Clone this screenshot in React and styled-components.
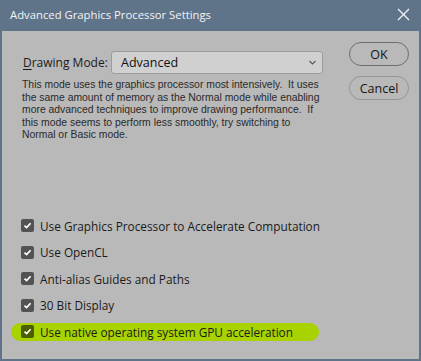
import React from "react";
import styled, { createGlobalStyle } from "styled-components";

const Global = createGlobalStyle`
  html, body { margin: 0; padding: 0; background: #b9b9b9; }
  * { box-sizing: border-box; }
`;

const Window = styled.div`
  width: 421px;
  height: 361px;
  display: flex;
  flex-direction: column;
  background: #b9b9b9;
  border: 2px solid #5f7389;
  border-top: none;
  font-family: "Open Sans", "Noto Sans", sans-serif;
  color: #1b1b1b;
`;

const TitleBar = styled.div`
  height: 31px;
  flex: none;
  display: flex;
  align-items: center;
  justify-content: space-between;
  background: #5f7389;
  margin: 0 -2px;
  padding: 0 10px 2px 10px;
  color: #f2f4f6;
  font-size: 11.3px;
`;

const CloseIcon = styled.svg`
  width: 13px;
  height: 13px;
  margin-right: 1px;
`;

const Body = styled.div`
  flex: 1;
  display: flex;
  flex-direction: column;
  padding: 11px 10px 0 19px;
`;

const Top = styled.div`
  display: flex;
  justify-content: space-between;
`;

const Main = styled.div`
  width: 302px;
  padding-top: 9px;
`;

const ModeRow = styled.div`
  display: flex;
  align-items: center;
`;

const Label = styled.span`
  font-size: 12px;
  padding-left: 2px;
  width: 90px;
  flex: none;
  white-space: nowrap;
  u { text-decoration: underline; text-underline-offset: 2px; }
`;

const Select = styled.div`
  flex: 1;
  height: 23px;
  display: flex;
  align-items: center;
  justify-content: space-between;
  padding: 0 6px 0 9px;
  background: #d0d0d0;
  border: 1px solid #9b9b9b;
  border-radius: 3px;
  font-size: 12.5px;
  color: #111;
`;

const Description = styled.p`
  margin: 5px 0 0 1px;
  font-family: "Liberation Sans", Arial, sans-serif;
  font-size: 10.4px;
  line-height: 12.5px;
  color: #2a2a2a;
  white-space: nowrap;
`;

const Buttons = styled.div`
  display: flex;
  flex-direction: column;
  gap: 10px;
`;

const Button = styled.div`
  width: 60px;
  height: 24px;
  display: flex;
  align-items: center;
  justify-content: center;
  border: 1px solid ${(p) => (p.$default ? "#6e6e6e" : "#959595")};
  border-radius: 12px;
  font-size: 12.5px;
  color: #151515;
`;

const Checks = styled.div`
  margin-top: 75px;
  display: flex;
  flex-direction: column;
  align-items: flex-start;
  gap: 8.5px;
`;

const Row = styled.div`
  display: inline-flex;
  align-items: center;
  gap: 6px;
  height: 18px;
  font-size: 11.8px;
  margin-left: ${(p) => (p.$highlight ? "-10px" : "0")};
  padding: ${(p) => (p.$highlight ? "0 26px 0 10px" : "0")};
  background: ${(p) => (p.$highlight ? "#a8d300" : "transparent")};
  border-radius: 9px;
`;

const Box = styled.span`
  width: 13px;
  height: 13px;
  flex: none;
  border-radius: 2px;
  background: rgba(0, 0, 0, 0.55);
  display: flex;
  align-items: center;
  justify-content: center;
`;

const Check = () => (
  <Box>
    <svg width="9" height="9" viewBox="0 0 9 9">
      <path d="M1.5 4.6 L3.6 6.6 L7.6 2.2" stroke="#fff" strokeWidth="1.7" fill="none" />
    </svg>
  </Box>
);

const items = [
  "Use Graphics Processor to Accelerate Computation",
  "Use OpenCL",
  "Anti-alias Guides and Paths",
  "30 Bit Display",
  "Use native operating system GPU acceleration",
];

const descLines = [
  "This mode uses the graphics processor most intensively.\u00a0 It uses",
  "the same amount of memory as the Normal mode while enabling",
  "more advanced techniques to improve drawing performance.\u00a0 If",
  "this mode seems to perform less smoothly, try switching to",
  "Normal or Basic mode.",
];

export default function App() {
  return (
    <>
      <Global />
      <Window>
        <TitleBar>
          <span>Advanced Graphics Processor Settings</span>
          <CloseIcon viewBox="0 0 13 13">
            <path d="M1 1 L12 12 M12 1 L1 12" stroke="#f2f4f6" strokeWidth="1.3" />
          </CloseIcon>
        </TitleBar>
        <Body>
          <Top>
            <Main>
              <ModeRow>
                <Label>
                  <u>D</u>rawing Mode:
                </Label>
                <Select>
                  <span>Advanced</span>
                  <svg width="7" height="5" viewBox="0 0 7 5">
                    <path d="M0.5 1 L3.5 4 L6.5 1" stroke="#555" strokeWidth="1.1" fill="none" />
                  </svg>
                </Select>
              </ModeRow>
              <Description>
                {descLines.map((l, i) => (
                  <React.Fragment key={i}>
                    {l}
                    {i < descLines.length - 1 && <br />}
                  </React.Fragment>
                ))}
              </Description>
            </Main>
            <Buttons>
              <Button $default>OK</Button>
              <Button>Cancel</Button>
            </Buttons>
          </Top>
          <Checks>
            {items.map((t, i) => (
              <Row key={t} $highlight={i === items.length - 1}>
                <Check />
                <span>{t}</span>
              </Row>
            ))}
          </Checks>
        </Body>
      </Window>
    </>
  );
}
